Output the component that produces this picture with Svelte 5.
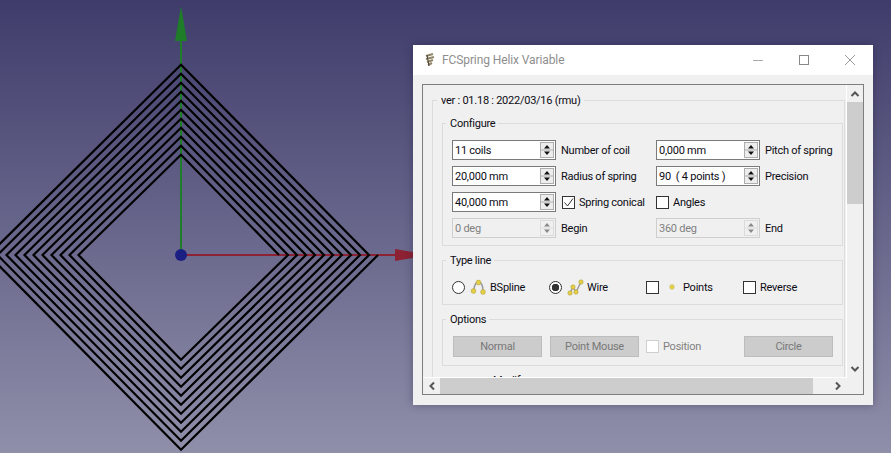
<script>
  // square spiral of the spring, one vertex per quarter turn
  const cx = 181;
  const cy = 255;
  const dirs = [[1, 0], [0, 1], [-1, 0], [0, -1]];
  let coil = [];
  for (let n = 0; n <= 44; n++) {
    const r = 197 - 2.25 * n;
    const d = dirs[n % 4];
    coil.push((cx + d[0] * r) + "," + (cy + d[1] * r));
  }
  const coilPoints = coil.join(" ");

  const rows = [
    { value: "11 coils", label: "Number of coil", value2: "0,000 mm", label2: "Pitch of spring" },
    { value: "20,000 mm", label: "Radius of spring", value2: "90  ( 4 points )", label2: "Precision" }
  ];
</script>

{#snippet spin(value, disabled = false)}
  <div class="spin" class:disabled>
    <span class="spin_value">{value}</span>
    <span class="spin_btns">
      <svg width="14" height="16" viewBox="0 0 14 16">
        <rect x="0.5" y="0.5" width="13" height="15" fill={disabled ? "#f0f0f0" : "#ededed"} stroke={disabled ? "#dcdcdc" : "#adadad"} />
        <path d="M1 8H13" stroke={disabled ? "#dcdcdc" : "#adadad"} />
        <path d="M7 3L10 6.5H4Z M7 13L10 9.5H4Z" fill={disabled ? "#8a8a8a" : "#111"} />
      </svg>
    </span>
  </div>
{/snippet}

<div class="view">
  <svg class="scene" width="891" height="453" viewBox="0 0 891 453">
    <path d="M181 255V40" stroke="#1f7d2a" stroke-width="2" />
    <polygon points="181,6 175,41 187,41" fill="#1f7d2a" />
    <path d="M181 255H396" stroke="#8c2233" stroke-width="2" />
    <polygon points="430,255 395,249 395,261" fill="#8c2233" />
    <polyline points={coilPoints} fill="none" stroke="#000" stroke-width="2.2" />
    <circle cx="181" cy="255" r="6" fill="#1c1f82" />
  </svg>

  <div class="window">
    <div class="titlebar">
      <svg class="app_icon" width="12" height="14" viewBox="0 0 12 14">
        <path d="M2 3L9 1M2 6L10 4M3 9L9 7M4 12L8 10" stroke="#8f8468" stroke-width="2" />
        <path d="M3 2L5 13" stroke="#4b4030" stroke-width="1" />
      </svg>
      <span class="title">FCSpring Helix Variable</span>
      <span class="winbtns">
        <svg width="12" height="12" viewBox="0 0 12 12"><path d="M1 6.5H11" stroke="#aaa" /></svg>
        <svg width="12" height="12" viewBox="0 0 12 12"><rect x="1.5" y="1.5" width="9" height="9" fill="none" stroke="#888" /></svg>
        <svg width="12" height="12" viewBox="0 0 12 12"><path d="M1 1L11 11M11 1L1 11" stroke="#999" /></svg>
      </span>
    </div>

    <div class="body">
      <div class="frame">
        <div class="viewport">
          <div class="group outer">
            <div class="legend">ver : 01.18 : 2022/03/16 (rmu)</div>

            <div class="group">
              <div class="legend">Configure</div>
              <div class="form">
                {#each rows as row}
                  {@render spin(row.value)}
                  <span class="lab">{row.label}</span>
                  {@render spin(row.value2)}
                  <span class="lab">{row.label2}</span>
                {/each}

                {@render spin("40,000 mm")}
                <label class="check first"><span class="box tick">
                  <svg width="11" height="11" viewBox="0 0 11 11"><path d="M1.5 5.5L4.5 9L10 1.5" fill="none" stroke="#333" /></svg>
                </span>Spring conical</label>
                <label class="check"><span class="box"></span>Angles</label>
                <span></span>

                {@render spin("0 deg", true)}
                <span class="lab">Begin</span>
                {@render spin("360 deg", true)}
                <span class="lab">End</span>
              </div>
            </div>

            <div class="group">
              <div class="legend">Type line</div>
              <div class="types">
                <label class="type t1"><span class="radio"></span>
                  <svg class="ico" width="17" height="17" viewBox="0 0 17 17">
                    <path d="M3.5 12Q5 2 9 3T13 13" fill="none" stroke="#9b9b9b" stroke-width="1.5" />
                    <circle cx="3.5" cy="12" r="2.4" fill="#e4cf45" stroke="#a8993a" stroke-width=".5" />
                    <circle cx="8.5" cy="3.5" r="2.4" fill="#e4cf45" stroke="#a8993a" stroke-width=".5" />
                    <circle cx="13" cy="13" r="2.4" fill="#e4cf45" stroke="#a8993a" stroke-width=".5" />
                  </svg>BSpline</label>
                <label class="type t2"><span class="radio on"></span>
                  <svg class="ico" width="17" height="17" viewBox="0 0 17 17">
                    <path d="M3 14L6 8L9 13L14 3" fill="none" stroke="#9b9b9b" stroke-width="1.5" />
                    <circle cx="3" cy="14" r="2.2" fill="#e4cf45" stroke="#a8993a" stroke-width=".5" />
                    <circle cx="6" cy="8" r="2.2" fill="#e4cf45" stroke="#a8993a" stroke-width=".5" />
                    <circle cx="9" cy="13" r="2.2" fill="#e4cf45" stroke="#a8993a" stroke-width=".5" />
                    <circle cx="14" cy="3" r="2.2" fill="#e4cf45" stroke="#a8993a" stroke-width=".5" />
                  </svg>Wire</label>
                <label class="type t3"><span class="box"></span>
                  <svg class="dot" width="6" height="6" viewBox="0 0 6 6"><circle cx="3" cy="3" r="2.4" fill="#e4cf45" stroke="#c9c28a" stroke-width=".5" /></svg>Points</label>
                <label class="type t4"><span class="box"></span>Reverse</label>
              </div>
            </div>

            <div class="group">
              <div class="legend">Options</div>
              <div class="options">
                <button disabled>Normal</button>
                <button disabled>Point Mouse</button>
                <label class="check off"><span class="box"></span>Position</label>
                <button disabled class="circle">Circle</button>
              </div>
            </div>

            <div class="group">
              <div class="legend clipped">Modify</div>
            </div>
          </div>
        </div>

        <div class="vbar">
          <svg class="arrow" width="16" height="17" viewBox="0 0 16 17"><path d="M4.5 11L8 7.5L11.5 11" fill="none" stroke="#555" stroke-width="2" /></svg>
          <div class="vtrack"><div class="vthumb"></div></div>
          <svg class="arrow" width="16" height="17" viewBox="0 0 16 17"><path d="M4.5 6L8 9.5L11.5 6" fill="none" stroke="#555" stroke-width="2" /></svg>
        </div>
        <div class="hbar">
          <svg class="arrow" width="17" height="16" viewBox="0 0 17 16"><path d="M11 4.5L7.5 8L11 11.5" fill="none" stroke="#555" stroke-width="2" /></svg>
          <div class="htrack"><div class="hthumb"></div></div>
          <svg class="arrow" width="17" height="16" viewBox="0 0 17 16"><path d="M6 4.5L9.5 8L6 11.5" fill="none" stroke="#555" stroke-width="2" /></svg>
        </div>
        <div class="corner"></div>
      </div>
    </div>
  </div>
</div>

<style>
  :global(body) {
    margin: 0;
    overflow: hidden;
  }

  .view {
    position: relative;
    width: 891px;
    height: 453px;
    overflow: hidden;
    background: linear-gradient(#3f3c6b, #8f8faa);
    font-family: Roboto, sans-serif;
    font-size: 11px;
    letter-spacing: -0.25px;
    color: #0c0c14;
  }

  .scene {
    position: absolute;
    left: 0;
    top: 0;
  }

  .window {
    position: absolute;
    left: 413px;
    top: 45px;
    width: 460px;
    height: 360px;
    background: #f0f0f0;
    display: flex;
    flex-direction: column;
    box-shadow: 0 0 8px rgba(20, 20, 50, 0.35);
  }

  .titlebar {
    height: 30px;
    flex: none;
    background: #fff;
    display: flex;
    align-items: center;
    padding-left: 11px;
    box-sizing: border-box;
  }

  .app_icon {
    margin-right: 6px;
  }

  .title {
    font-size: 12px;
    letter-spacing: -0.1px;
    color: #8e8e8e;
  }

  .winbtns {
    margin-left: auto;
    display: flex;
    gap: 34px;
    padding-right: 17px;
  }

  .body {
    flex: 1;
    padding: 9px 9px 10px 9px;
    min-height: 0;
  }

  .frame {
    height: 100%;
    box-sizing: border-box;
    border: 1px solid #7e7e7e;
    display: grid;
    grid-template-columns: 1fr 16px;
    grid-template-rows: 1fr 16px;
  }

  .viewport {
    overflow: hidden;
    padding: 15px 1px 0 9px;
    background: #f0f0f0;
    border-right: 1px solid #fff;
    border-bottom: 1px solid #fff;
    min-height: 0;
  }

  .group {
    border: 1px solid #dcdcdc;
    padding: 15px 9px 7px 9px;
    margin-top: 14px;
  }

  .group.outer {
    margin-top: 0;
    padding: 0 1px 40px 9px;
  }

  .legend {
    width: fit-content;
    background: #f0f0f0;
    padding: 0 3px 0 4px;
    margin: -23px 0 9px -6px;
    height: 15px;
    line-height: 15px;
    white-space: nowrap;
  }

  .outer > .legend {
    margin: -8px 0 0 -5px;
  }

  .outer > .legend + .group {
    margin-top: 15px;
  }

  .clipped {
    margin-left: 37px;
  }

  .form {
    display: grid;
    grid-template-columns: 104px 100px 104px auto;
    grid-auto-rows: 20px;
    row-gap: 6px;
    align-items: center;
  }

  .lab {
    padding: 1px 0 0 5px;
    white-space: nowrap;
  }

  .spin {
    height: 20px;
    box-sizing: border-box;
    border: 1px solid #7a7a7a;
    background: #fff;
    display: flex;
    align-items: center;
    justify-content: space-between;
    padding: 0 1px 0 2px;
  }

  .spin.disabled {
    border-color: #cfcfcf;
    background: #f0f0f0;
    color: #808080;
  }

  .spin_value {
    white-space: pre;
    padding-top: 1px;
  }

  .spin_btns {
    display: flex;
  }

  .check {
    display: flex;
    align-items: center;
    gap: 4px;
    white-space: nowrap;
  }

  .check.first {
    padding-left: 6px;
  }

  .off {
    color: #808080;
    margin-left: -1px;
  }

  .box {
    width: 13px;
    height: 13px;
    box-sizing: border-box;
    border: 1px solid #333;
    background: #fff;
    display: inline-flex;
    align-items: center;
    justify-content: center;
    flex: none;
  }

  .off .box {
    border-color: #cfcfcf;
  }

  .radio {
    width: 13px;
    height: 13px;
    box-sizing: border-box;
    border: 1px solid #333;
    border-radius: 50%;
    background: #fff;
    display: inline-block;
    flex: none;
  }

  .radio.on {
    background: radial-gradient(circle, #333 0 3.5px, #fff 4px);
  }

  .types {
    display: flex;
    height: 20px;
    align-items: center;
  }

  .type {
    display: flex;
    align-items: center;
    white-space: nowrap;
  }

  .t1 { width: 97px; }
  .t2 { width: 97px; }
  .t3 { width: 97px; }

  .ico {
    margin: 0 3px 0 5px;
  }

  .dot {
    margin: 0 8px 0 10px;
  }

  .t4 .box {
    margin-right: 4px;
  }

  .options {
    display: flex;
    align-items: center;
    height: 21px;
    margin: 2px 0 1px;
    padding-left: 1px;
  }

  button {
    width: 89px;
    height: 21px;
    padding: 0;
    margin-right: 8px;
    font: inherit;
    letter-spacing: inherit;
    color: #787878;
    background: #cccccc;
    border: 1px solid #bdbdbd;
  }

  .circle {
    margin-left: auto;
    margin-right: 0;
  }

  .vbar {
    display: flex;
    flex-direction: column;
    min-height: 0;
    background: #f0f0f0;
  }

  .vtrack {
    flex: 1;
  }

  .vthumb {
    height: 102px;
    background: #cdcdcd;
  }

  .hbar {
    display: flex;
    background: #f0f0f0;
  }

  .htrack {
    flex: 1;
  }

  .hthumb {
    width: 373px;
    height: 100%;
    background: #cdcdcd;
  }

  .arrow {
    flex: none;
  }
</style>
